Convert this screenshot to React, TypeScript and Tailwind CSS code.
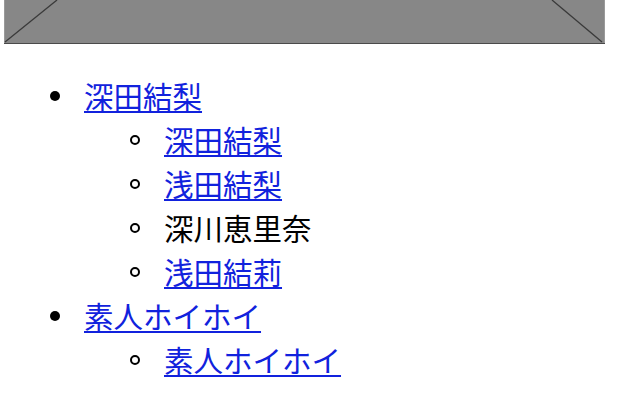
import React from "react";

type Item = { label: string; link: boolean; children?: Item[] };

const items: Item[] = [
  {
    label: "深田結梨",
    link: true,
    children: [
      { label: "深田結梨", link: true },
      { label: "浅田結梨", link: true },
      { label: "深川恵里奈", link: false },
      { label: "浅田結莉", link: true },
    ],
  },
  {
    label: "素人ホイホイ",
    link: true,
    children: [{ label: "素人ホイホイ", link: true }],
  },
];

function Label({ item }: { item: Item }) {
  if (!item.link) return <span className="text-black">{item.label}</span>;
  return (
    <a href="#" className="text-[#1122dd] underline underline-offset-[3px]">
      {item.label}
    </a>
  );
}

function Row({ item, nested }: { item: Item; nested?: boolean }) {
  return (
    <li className={nested ? "flex items-center pl-[130px]" : "flex items-center pl-[50px]"}>
      {nested ? (
        <span className="mt-[2px] mr-[24px] w-[10px] h-[10px] rounded-full border-2 border-black shrink-0" />
      ) : (
        <span className="mt-[2px] mr-[24px] w-[10px] h-[10px] rounded-full bg-black shrink-0" />
      )}
      <Label item={item} />
    </li>
  );
}

export default function App() {
  return (
    <div
      className="w-[640px] h-[400px] overflow-hidden bg-white text-[29.5px] leading-[44px]"
      style={{ fontFamily: '"Noto Sans CJK JP", "Noto Sans", sans-serif' }}
    >
      <div className="ml-[4px] w-[601px] h-[44px]">
        <svg width="601" height="44" viewBox="0 0 601 44">
          <rect x="0" y="0" width="601" height="44" fill="#878787" />
          <line x1="0.5" y1="0" x2="0.5" y2="44" stroke="#9a9a9a" strokeWidth="1" />
          <line x1="600.5" y1="0" x2="600.5" y2="44" stroke="#9a9a9a" strokeWidth="1" />
          <line x1="0" y1="43.5" x2="601" y2="43.5" stroke="#4a4a4a" strokeWidth="1" />
          <line x1="1" y1="42" x2="53" y2="0" stroke="#3a3a3a" strokeWidth="1.3" />
          <line x1="598" y1="42" x2="548" y2="0" stroke="#3a3a3a" strokeWidth="1.3" />
        </svg>
      </div>
      <ul className="mt-[29px]">
        {items.map((item, i) => (
          <React.Fragment key={i}>
            <Row item={item} />
            {item.children?.map((c, j) => (
              <Row key={j} item={c} nested />
            ))}
          </React.Fragment>
        ))}
      </ul>
    </div>
  );
}
